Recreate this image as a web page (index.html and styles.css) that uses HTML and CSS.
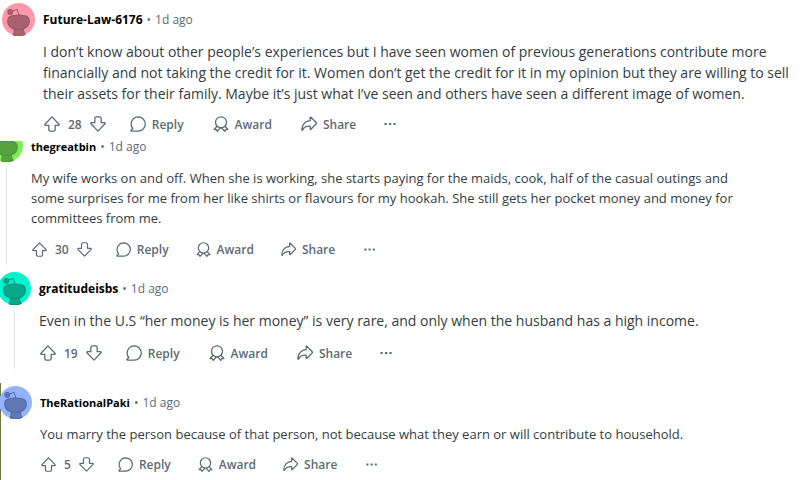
FILE: index.html
```
<!DOCTYPE html>
<html lang="en">
<head>
  <meta charset="UTF-8">
  <meta name="viewport" content="width=device-width, initial-scale=1.0">
  <title>Comments</title>
  <link rel="stylesheet" href="styles.css">
</head>
<body>

  <!-- Shared icons -->
  <svg class="sprite" aria-hidden="true">
    <symbol id="icon-up" viewBox="0 0 16 16">
      <path d="M8 .9 15 8.200c.4.5.2 1.100-.5 1.100h-3.300v4.200c0 1.100-.8 1.700-1.700 1.700h-3c-.9 0-1.700-.6-1.700-1.700V9.300H1.500c-.7 0-.9-.6-.5-1.100z"/>
    </symbol>
    <symbol id="icon-down" viewBox="0 0 16 16">
      <path d="M8 15.100 1 7.800c-.4-.5-.2-1.100.5-1.100h3.300V2.500c0-1.100.8-1.700 1.700-1.700h3c.9 0 1.700.6 1.700 1.700v4.200h3.300c.7 0 .9.6.5 1.100z"/>
    </symbol>
    <symbol id="icon-reply" viewBox="0 0 16 16">
      <path d="M8.200.9a7.100 7.100 0 1 1 0 14.200H1.400c-.6 0-.7-.4-.3-.8l1.700-1.800A7.100 7.100 0 0 1 8.200.9z"/>
    </symbol>
    <symbol id="icon-award" viewBox="0 0 16 16">
      <circle cx="8" cy="6.300" r="5.500"/>
      <path d="M4 10.300 1.200 13.500l2.300.2.800 1.700 3.200-3.600M12 10.300l2.800 3.200-2.300.2-.8 1.700-3.200-3.600"/>
    </symbol>
    <symbol id="icon-share" viewBox="0 0 16 16">
      <path d="M9.200 1.600c0-.4.4-.6.700-.3l5.400 5.500c.3.300.3.700 0 1l-5.400 5.500c-.3.300-.7.100-.7-.3v-2.800C5.400 10 3 11 1.600 13.900c-.3.500-.8.400-.8-.2C.9 8.700 4.300 4.900 9.200 4.600z"/>
    </symbol>
    <symbol id="icon-more" viewBox="0 0 16 16">
      <path class="dots" d="M2.500 7h2.200v2H2.500zM7 7h2.200v2H7zM11.500 7h2.200v2h-2.200z"/>
    </symbol>
    <symbol id="snoo" viewBox="0 0 32 32">
      <circle class="bg" cx="16" cy="16" r="16"/>
      <g class="alien">
        <path d="M11 31c.5-2 1-3 .8-6h9c0 3 .6 4 1.700 5.500-3.500 1.500-8 1.700-11.500.5z"/>
        <path d="M5.500 17.500c0-3 1.500-4.600 4-5.200 4-.8 9-.8 13 0 2.500.6 4 2.200 4 5.200 0 2.500-.8 4.500-2.800 6-4 2.800-11.400 2.800-15.400 0-2-1.500-2.800-3.500-2.800-6z"/>
        <circle cx="8" cy="8.700" r="2.300"/>
        <path class="antenna" d="m10 8 4.500-1.800 2 5.500"/>
      </g>
    </symbol>
  </svg>

  <main class="thread">

    <article class="comment comment-first">
      <div class="side">
        <svg class="avatar pink" aria-hidden="true"><use href="#snoo"/></svg>
      </div>
      <div class="content">
        <header class="meta">
          <a class="author" href="#">Future-Law-6176</a>
          <span class="dot">•</span>
          <time>1d ago</time>
        </header>
        <p class="text">I don’t know about other people’s experiences but I have seen women of previous generations contribute more financially and not taking the credit for it. Women don’t get the credit for it in my opinion but they are willing to sell their assets for their family. Maybe it’s just what I’ve seen and others have seen a different image of women.</p>
        <div class="actions">
          <button class="vote" aria-label="Upvote"><svg class="icon"><use href="#icon-up"/></svg></button>
          <span class="score">28</span>
          <button class="vote" aria-label="Downvote"><svg class="icon"><use href="#icon-down"/></svg></button>
          <button class="action"><svg class="icon"><use href="#icon-reply"/></svg>Reply</button>
          <button class="action"><svg class="icon"><use href="#icon-award"/></svg>Award</button>
          <button class="action"><svg class="icon"><use href="#icon-share"/></svg>Share</button>
          <button class="action more" aria-label="More options"><svg class="icon"><use href="#icon-more"/></svg></button>
        </div>
      </div>
    </article>

    <article class="comment comment-cut compact">
      <div class="side">
        <svg class="avatar green" aria-hidden="true"><use href="#snoo"/></svg>
        <div class="line"></div>
      </div>
      <div class="content">
        <header class="meta">
          <a class="author" href="#">thegreatbin</a>
          <span class="dot">•</span>
          <time>1d ago</time>
        </header>
        <p class="text">My wife works on and off. When she is working, she starts paying for the maids, cook, half of the casual outings and some surprises for me from her like shirts or flavours for my hookah. She still gets her pocket money and money for committees from me.</p>
        <div class="actions">
          <button class="vote" aria-label="Upvote"><svg class="icon"><use href="#icon-up"/></svg></button>
          <span class="score">30</span>
          <button class="vote" aria-label="Downvote"><svg class="icon"><use href="#icon-down"/></svg></button>
          <button class="action"><svg class="icon"><use href="#icon-reply"/></svg>Reply</button>
          <button class="action"><svg class="icon"><use href="#icon-award"/></svg>Award</button>
          <button class="action"><svg class="icon"><use href="#icon-share"/></svg>Share</button>
          <button class="action more" aria-label="More options"><svg class="icon"><use href="#icon-more"/></svg></button>
        </div>
      </div>
    </article>

    <article class="comment comment-short">
      <div class="side">
        <svg class="avatar teal" aria-hidden="true"><use href="#snoo"/></svg>
        <div class="line"></div>
      </div>
      <div class="content">
        <header class="meta">
          <a class="author" href="#">gratitudeisbs</a>
          <span class="dot">•</span>
          <time>1d ago</time>
        </header>
        <p class="text">Even in the U.S “her money is her money” is very rare, and only when the husband has a high income.</p>
        <div class="actions">
          <button class="vote" aria-label="Upvote"><svg class="icon"><use href="#icon-up"/></svg></button>
          <span class="score">19</span>
          <button class="vote" aria-label="Downvote"><svg class="icon"><use href="#icon-down"/></svg></button>
          <button class="action"><svg class="icon"><use href="#icon-reply"/></svg>Reply</button>
          <button class="action"><svg class="icon"><use href="#icon-award"/></svg>Award</button>
          <button class="action"><svg class="icon"><use href="#icon-share"/></svg>Share</button>
          <button class="action more" aria-label="More options"><svg class="icon"><use href="#icon-more"/></svg></button>
        </div>
      </div>
    </article>

    <article class="comment comment-last compact">
      <div class="side">
        <svg class="avatar blue" aria-hidden="true"><use href="#snoo"/></svg>
      </div>
      <div class="content">
        <header class="meta">
          <a class="author" href="#">TheRationalPaki</a>
          <span class="dot">•</span>
          <time>1d ago</time>
        </header>
        <p class="text">You marry the person because of that person, not because what they earn or will contribute to household.</p>
        <div class="actions">
          <button class="vote" aria-label="Upvote"><svg class="icon"><use href="#icon-up"/></svg></button>
          <span class="score">5</span>
          <button class="vote" aria-label="Downvote"><svg class="icon"><use href="#icon-down"/></svg></button>
          <button class="action"><svg class="icon"><use href="#icon-reply"/></svg>Reply</button>
          <button class="action"><svg class="icon"><use href="#icon-award"/></svg>Award</button>
          <button class="action"><svg class="icon"><use href="#icon-share"/></svg>Share</button>
          <button class="action more" aria-label="More options"><svg class="icon"><use href="#icon-more"/></svg></button>
        </div>
      </div>
    </article>

  </main>

</body>
</html>
```

FILE: styles.css
```
* {
  box-sizing: border-box;
}

body {
  margin: 0;
  font-family: "Segoe UI", "Open Sans", "Noto Sans", sans-serif;
  font-size: 14px;
  background: #fff;
  color: #333d42;
}

.sprite {
  display: block;
  width: 0;
  height: 0;
}

.comment {
  display: flex;
  gap: 8px;
}

.compact {
  font-size: 13px;
}

.comment-first {
  padding: 3px 0 1px 2px;
}

/* avatar is scrolled under the comment above */
.comment-cut {
  padding: 0 40px 4px 0;
}

.comment-cut .side {
  margin-left: -10px;
  overflow: hidden;
}

.comment-cut .avatar {
  margin-top: -12px;
}

.comment-cut .content {
  margin-top: -11px;
}

.comment-cut .text {
  margin-bottom: 5px;
}

.comment-short {
  padding: 3px 16px 14px 0;
}

.comment-short .side {
  margin-left: -2px;
}

.comment-short .text {
  margin-bottom: 6px;
}

.comment-last {
  padding: 3px 16px 0 0;
  border-left: 1px solid #6b7443;
}

.comment-last .side {
  margin-left: -2px;
}

.side {
  display: flex;
  flex-direction: column;
  align-items: center;
  flex: none;
  width: 33px;
}

.avatar {
  flex: none;
  width: 33px;
  height: 33px;
}

.line {
  flex: 1;
  width: 1px;
  margin-top: 6px;
  background: #dde1e3;
}

.bg {
  fill: var(--bg);
}

.alien {
  fill: var(--alien);
  stroke: var(--edge);
  stroke-width: 1;
}

.antenna {
  fill: none;
}

.pink {
  --bg: #ff99aa;
  --alien: #a8626f;
  --edge: #965865;
}

.green {
  --bg: #7eed56;
  --alien: #53a43a;
  --edge: #4a9633;
}

.teal {
  --bg: #00f5cc;
  --alien: #08a889;
  --edge: #069078;
}

.blue {
  --bg: #94b3ff;
  --alien: #6078b4;
  --edge: #5369a4;
}

.content {
  flex: 1;
  min-width: 0;
}

.meta {
  display: flex;
  align-items: center;
  gap: 4px;
  height: 32px;
  font-size: 12px;
  color: #5c6c74;
}

.author {
  color: #000;
  font-weight: 700;
  text-decoration: none;
}

.compact .author {
  font-size: 11px;
}

.text {
  margin: 6px 0 4px;
  line-height: 21px;
}

.compact .text {
  line-height: 20px;
}

.actions {
  display: flex;
  align-items: center;
  height: 32px;
  padding-left: 1px;
  font-size: 12px;
  font-weight: 600;
  color: #5c6c74;
}

button {
  display: flex;
  align-items: center;
  gap: 6px;
  height: 32px;
  padding: 0;
  border: 0;
  background: none;
  color: inherit;
  font: inherit;
  cursor: pointer;
}

.score {
  margin: 0 8px;
}

.vote + .action {
  margin-left: 24px;
}

.action + .action {
  margin-left: 29px;
}

.compact .action + .action {
  margin-left: 27px;
}

.action + .more {
  margin-left: 26px;
}

.icon {
  width: 16px;
  height: 16px;
  fill: none;
  stroke: #5c6c74;
  stroke-width: 1.3;
  stroke-linejoin: round;
}

.compact .icon {
  width: 15px;
  height: 15px;
}

.dots {
  fill: #5c6c74;
  stroke: none;
}
```
